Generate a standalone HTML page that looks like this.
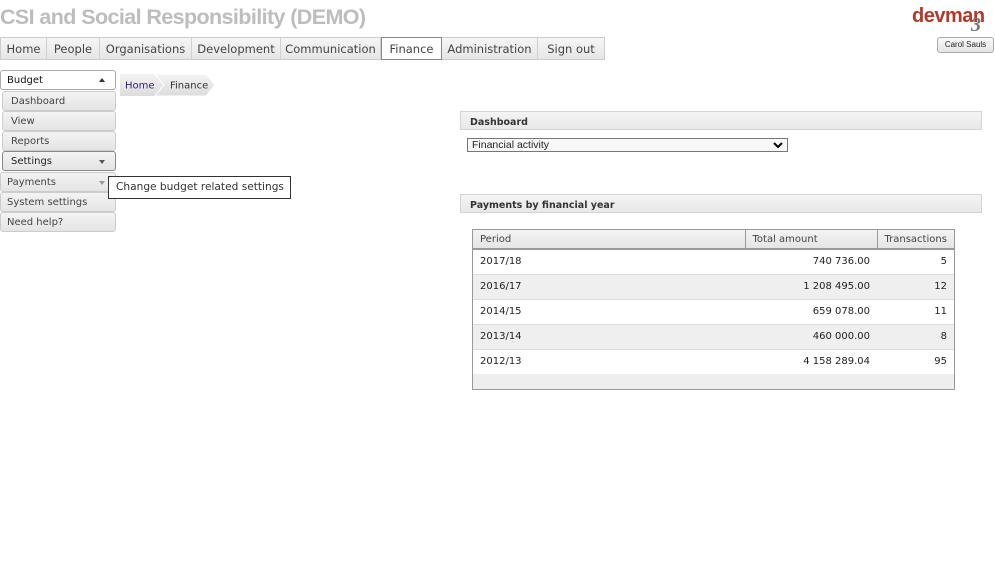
<!DOCTYPE html>
<html><head><meta charset="utf-8"><style>
*{box-sizing:border-box;margin:0;padding:0}
body{width:995px;height:588px;background:#fff;font-family:"DejaVu Sans","Liberation Sans",sans-serif;font-size:11px;color:#222;position:relative;overflow:hidden}
.a{position:absolute}
.title{left:0;top:5px;font-family:"Liberation Sans",sans-serif;font-weight:bold;font-size:21.5px;color:#bdbdbd;letter-spacing:-0.6px;white-space:nowrap}
.nav{left:0;top:37px;height:23px;display:flex;border:1px solid #ccc;background:linear-gradient(#f6f6f6,#e6e6e6)}
.nav div{height:21px;line-height:22px;text-align:center;border-right:1px solid #d0d0d0;font-size:11.5px;color:#444;white-space:nowrap}
.nav .on{background:#fff;border:1px solid #888;margin-top:-1px;height:23px;line-height:23px}
.sb{height:20px;line-height:19px;border:1px solid #ccc;border-radius:3px;background:linear-gradient(#f3f3f3,#e4e4e4);font-size:10px;color:#444}
.arr{position:absolute;right:10px;top:8px;width:0;height:0;border-left:3px solid transparent;border-right:3px solid transparent}
.panel{left:460px;width:522px;height:19px;border:1px solid #d4d4d4;background:linear-gradient(#f4f4f4,#e8e8e8);font-weight:bold;font-size:9.5px;line-height:21px;padding-left:9px;color:#333}
table{border-collapse:collapse;font-size:10px}
td{height:25px;padding:0 7px}
</style></head><body>
<div class="a title">CSI and Social Responsibility (DEMO)</div>
<div class="a" style="left:912px;top:5px;font-family:'Liberation Sans',sans-serif;font-weight:bold;font-size:20px;color:#b33a2a;letter-spacing:-0.5px">devman</div>
<div class="a" style="left:971px;top:14px;font-family:'Liberation Serif',serif;font-weight:bold;font-size:20px;color:#777;font-style:italic">3</div>
<div class="a" style="left:937px;top:37px;width:57px;height:16px;border:1px solid #aaa;border-radius:3px;background:linear-gradient(#fafafa,#e4e4e4);font-size:8px;line-height:14px;text-align:center;font-family:'Liberation Sans',sans-serif">Carol Sauls</div>
<div class="a nav">
<div style="width:46px">Home</div><div style="width:53px">People</div><div style="width:92px">Organisations</div><div style="width:89px">Development</div><div style="width:100px">Communication</div><div class="on" style="width:61px">Finance</div><div style="width:96px">Administration</div><div style="width:66px;border-right:0">Sign out</div>
</div>
<div class="a sb" style="left:0;top:70px;width:116px;background:#fff;border-color:#aaa;padding-left:6px;color:#111">Budget<span class="arr" style="top:7px;border-bottom:4px solid #333"></span></div>
<div class="a sb" style="left:2px;top:91px;width:114px;padding-left:8px">Dashboard</div>
<div class="a sb" style="left:2px;top:111px;width:114px;padding-left:8px">View</div>
<div class="a sb" style="left:2px;top:131px;width:114px;padding-left:8px">Reports</div>
<div class="a sb" style="left:2px;top:151px;width:114px;padding-left:8px;border-color:#888;color:#222">Settings<span class="arr" style="border-top:4px solid #555"></span></div>
<div class="a sb" style="left:0;top:172px;width:116px;padding-left:6px">Payments<span class="arr" style="border-top:4px solid #999"></span></div>
<div class="a sb" style="left:0;top:192px;width:116px;padding-left:6px">System settings</div>
<div class="a sb" style="left:0;top:212px;width:116px;padding-left:6px">Need help?</div>
<div class="a" style="left:108px;top:176px;width:183px;height:23px;border:1px solid #333;background:#fff;font-size:10.6px;line-height:21px;padding-left:7px;color:#333;white-space:nowrap;overflow:hidden">Change budget related settings</div>
<svg class="a" style="left:120px;top:74px" width="97" height="22"><defs><linearGradient id="g" x1="0" y1="0" x2="0" y2="1"><stop offset="0" stop-color="#f4f4f4"/><stop offset="1" stop-color="#dcdcdc"/></linearGradient></defs><path d="M0 0H35L44 11L35 22H0Z" fill="url(#g)"/><path d="M35 0H86L95 11L86 22H35L44 11Z" fill="url(#g)" stroke="#fff"/><text x="5" y="14.5" font-size="10" fill="#3a2070" font-family="DejaVu Sans">Home</text><text x="50" y="14.5" font-size="10" fill="#333" font-family="DejaVu Sans">Finance</text></svg>
<div class="a panel" style="top:111px">Dashboard</div>
<div class="a" style="left:467px;top:138px;width:321px;height:14px;border:1px solid #777;background:#f8f8f8;font-family:'Liberation Sans',sans-serif;font-size:10.5px;line-height:12px;padding-left:4px">Financial activity<svg class="a" style="right:4px;top:3px" width="10" height="7"><path d="M1 1L5 5L9 1" stroke="#000" stroke-width="2" fill="none"/></svg></div>
<div class="a panel" style="top:194px">Payments by financial year</div>
<div class="a" style="left:472px;top:229px;width:483px;height:161px;border:1px solid #999;background:#eee">
<table style="width:481px">
<tr style="background:linear-gradient(#f4f4f4,#e4e4e4)"><td style="height:19px;border-right:1px solid #999;border-bottom:2px solid #999;width:272px;color:#444">Period</td><td style="height:19px;border-right:1px solid #999;border-bottom:2px solid #999;width:132px;color:#444">Total amount</td><td style="height:19px;border-bottom:2px solid #999;color:#444">Transactions</td></tr>
<tr style="background:#fff"><td>2017/18</td><td style="text-align:right">740 736.00</td><td style="text-align:right">5</td></tr>
<tr style="background:#efefef;border-top:1px solid #ddd"><td>2016/17</td><td style="text-align:right">1 208 495.00</td><td style="text-align:right">12</td></tr>
<tr style="background:#fff;border-top:1px solid #ddd"><td>2014/15</td><td style="text-align:right">659 078.00</td><td style="text-align:right">11</td></tr>
<tr style="background:#efefef;border-top:1px solid #ddd"><td>2013/14</td><td style="text-align:right">460 000.00</td><td style="text-align:right">8</td></tr>
<tr style="background:#fff;border-top:1px solid #ddd"><td>2012/13</td><td style="text-align:right">4 158 289.04</td><td style="text-align:right">95</td></tr>
</table></div>
</body></html>
